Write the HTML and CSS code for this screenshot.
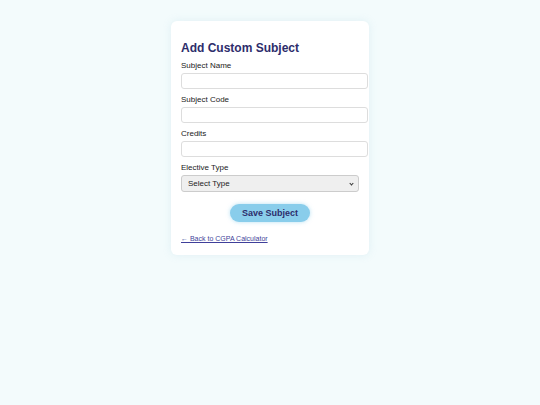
FILE: index.html
```html
<!DOCTYPE html>
<html>
<head>
<meta charset="utf-8">
<link rel="stylesheet" href="styles.css">
</head>
<body>
<div class="card">
  <h2 class="title">Add Custom Subject</h2>
  <form class="form">
    <label class="label">Subject Name</label>
    <input class="input" type="text">
    <label class="label">Subject Code</label>
    <input class="input" type="text">
    <label class="label">Credits</label>
    <input class="input" type="text">
    <label class="label">Elective Type</label>
    <div class="select-wrap">
      <select class="select"><option>Select Type</option></select>
    </div>
    <div class="actions"><button class="btn" type="button">Save Subject</button></div>
  </form>
  <a class="back" href="#">← Back to CGPA Calculator</a>
</div>
</body>
</html>
```
FILE: styles.css
```css
html, body { margin: 0; padding: 0; }
body {
  background: #f3fbfc;
  font-family: "Liberation Sans", Arial, sans-serif;
  height: 405px;
}
.card {
  width: 178px;
  margin: 21px auto 0;
  background: #fff;
  border-radius: 6px;
  box-shadow: 0 0 8px rgba(140, 190, 210, 0.18);
  padding: 20px 10px 10px;
}
.title {
  margin: 0 0 6px;
  font-size: 12px;
  font-weight: bold;
  color: #2d2d6b;
  line-height: 14px;
}
.form { display: flex; flex-direction: column; }
.label {
  font-size: 8px;
  line-height: 10px;
  color: #222;
  margin-bottom: 2px;
}
.input {
  width: 100%;
  box-sizing: content-box;
  padding: 0 4px 0 3px;
  border: 1px solid #ddd;
  border-radius: 3px;
  margin: 0 0 6px;
  font-size: 8px;
  align-self: flex-start;
  height: 14px;
}
.select-wrap {
  position: relative;
  width: 100%;
}
.select-wrap::after {
  content: "";
  position: absolute;
  right: 6px;
  top: 7px;
  width: 2px;
  height: 2px;
  border-right: 1px solid #333;
  border-bottom: 1px solid #333;
  transform: rotate(45deg);
  pointer-events: none;
}
.select {
  -webkit-appearance: none;
  appearance: none;
  display: block;
  width: 100%;
  height: 17px;
  border: 1px solid #ccc;
  border-radius: 3px;
  background: #efefef;
  font-size: 8px;
  font-family: "Liberation Sans", Arial, sans-serif;
  color: #222;
  padding: 0 6px;
}
.actions {
  display: flex;
  justify-content: center;
  margin-top: 12px;
}
.btn {
  width: 80px;
  height: 18px;
  border: none;
  border-radius: 9px;
  background: #89cdeb;
  color: #2d2d6b;
  font-weight: bold;
  font-size: 9px;
  font-family: "Liberation Sans", Arial, sans-serif;
  box-shadow: 0 0 4px rgba(137, 205, 235, 0.6);
}
.back {
  display: inline-block;
  margin-top: 12px;
  font-size: 7px;
  line-height: 9px;
  color: #3f3f9a;
}
```
